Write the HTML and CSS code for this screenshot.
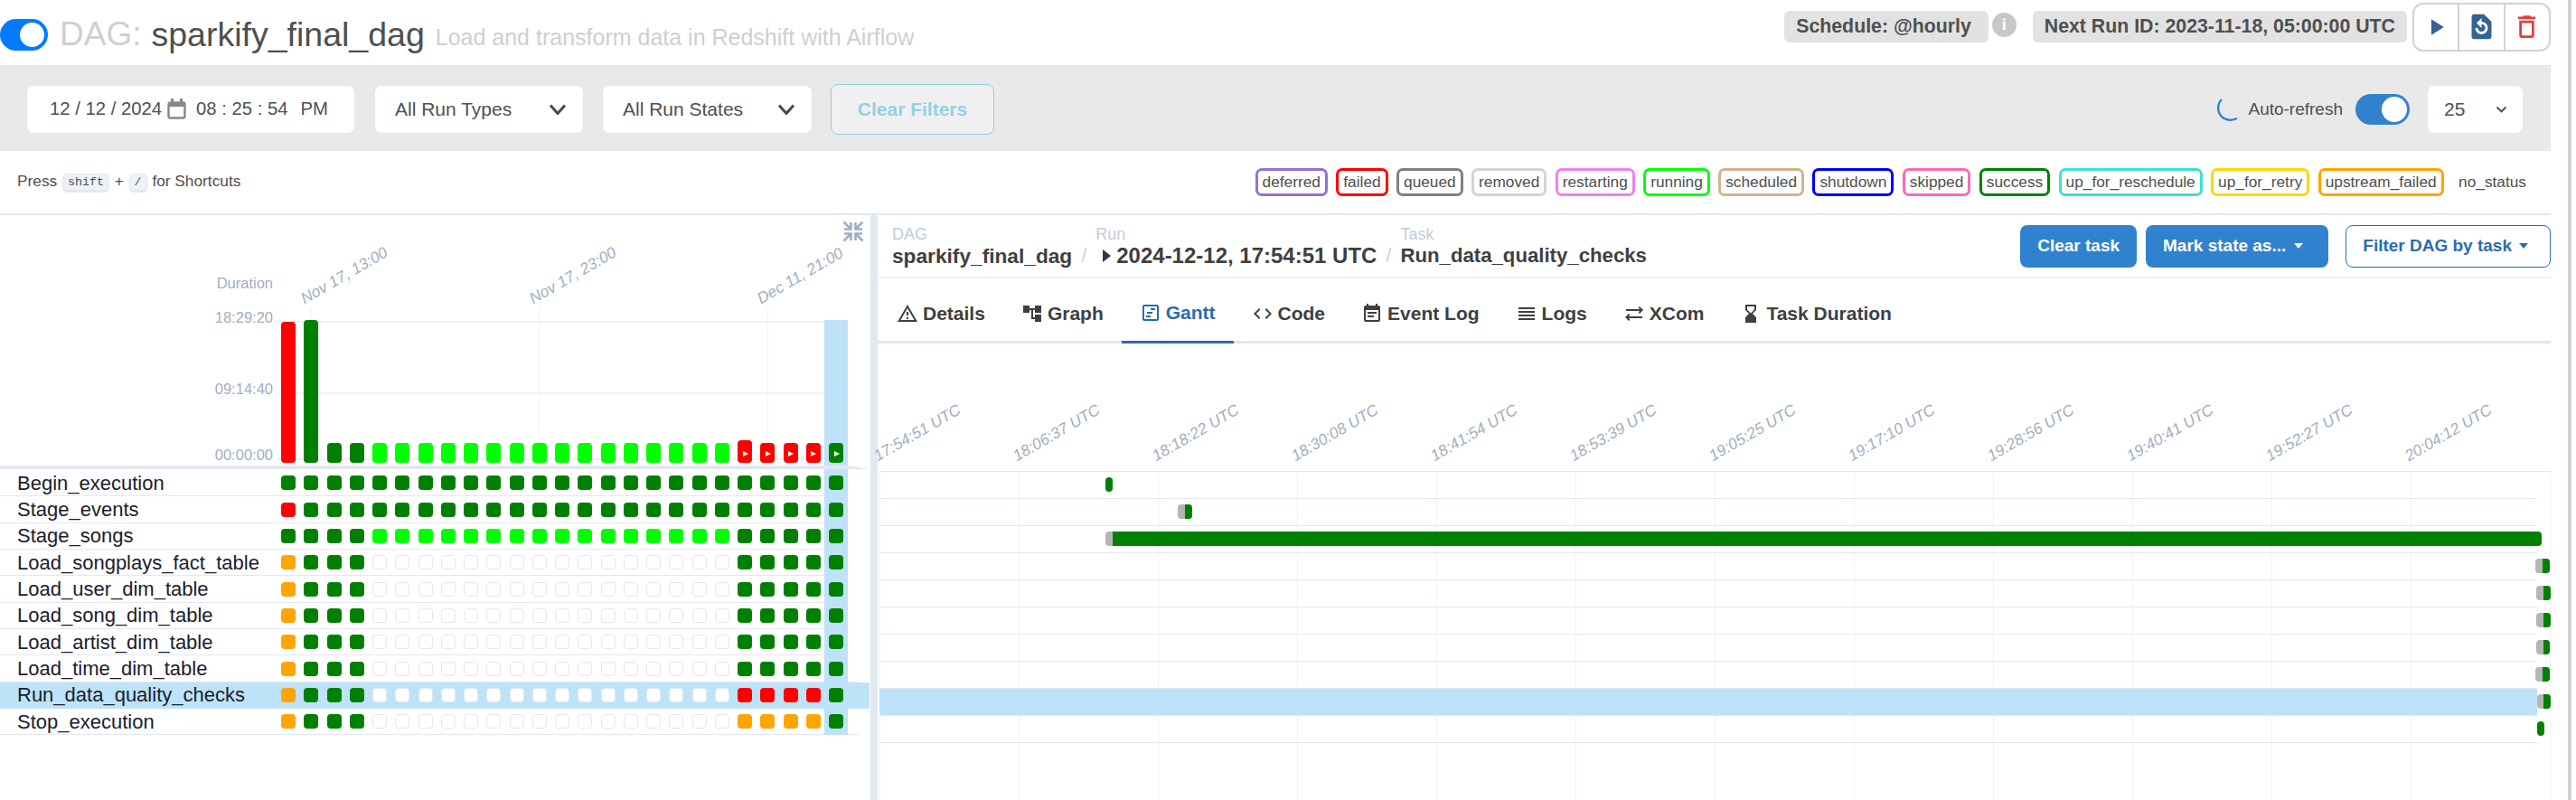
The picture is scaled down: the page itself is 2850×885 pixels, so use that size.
FILE: index.html
```html
<!DOCTYPE html>
<html lang="en">
<head>
<meta charset="utf-8">
<title>sparkify_final_dag - Grid</title>
<link rel="stylesheet" href="styles.css">
</head>
<body>
<div class="page">
<div class="app">
  <header class="header">
    <div class="title">
      <span class="toggle"><span class="knob"></span></span>
      <span class="dag-prefix">DAG:</span>
      <span class="dag-name">sparkify_final_dag</span>
      <span class="dag-desc">Load and transform data in Redshift with Airflow</span>
    </div>
    <div class="actions">
      <span class="pill pill-schedule">Schedule: @hourly</span>
      <span class="info">i</span>
      <span class="pill pill-next">Next Run ID: 2023-11-18, 05:00:00 UTC</span>
      <div class="btn-group">
        <span class="icon-btn"><svg width="30" height="30" viewBox="0 0 24 24"><path fill="#336492" d="M8 5v14l11-7z"/></svg></span>
        <span class="icon-btn"><svg width="33" height="33" viewBox="0 0 24 24"><path fill="#336492" d="M14 2H6c-1.1 0-1.99.9-1.99 2L4 20c0 1.1.89 2 2 2h12c1.1 0 2-.9 2-2V8l-6-6zm-2 16c-2.76 0-5-2.24-5-5h2c0 1.66 1.34 3 3 3s3-1.34 3-3-1.34-3-3-3v3L8 9l4-4v3c2.76 0 5 2.24 5 5s-2.24 5-5 5z"/></svg></span>
        <span class="icon-btn"><svg width="33" height="33" viewBox="0 0 24 24"><path fill="#e53e3e" d="M6 19c0 1.1.9 2 2 2h8c1.1 0 2-.9 2-2V7H6v12zM8 9h8v10H8V9zm7.5-5l-1-1h-5l-1 1H5v2h14V4h-3.5z"/></svg></span>
      </div>
    </div>
  </header>

  <section class="filters">
    <div class="filter-left">
      <div class="field field-date">
        <span>12 / 12 / 2024</span>
        <svg class="cal" width="23" height="23" viewBox="0 0 23 23"><path fill="none" stroke="#888" stroke-width="2.4" d="M2.5 6.5a2 2 0 0 1 2-2h14a2 2 0 0 1 2 2v13a2 2 0 0 1-2 2h-14a2 2 0 0 1-2-2z"/><path fill="#888" d="M2 4h19v5H2zM5 0h3v5H5zM15 0h3v5h-3z"/></svg>
        <span class="time">08 : 25 : 54</span>
        <span class="ampm">PM</span>
      </div>
      <div class="field field-select field-types">
        <span>All Run Types</span>
        <svg width="20" height="12" viewBox="0 0 20 12"><path fill="none" stroke="#4a4a4a" stroke-width="3" d="M2 1.5l8 9 8-9"/></svg>
      </div>
      <div class="field field-select field-states">
        <span>All Run States</span>
        <svg width="20" height="12" viewBox="0 0 20 12"><path fill="none" stroke="#4a4a4a" stroke-width="3" d="M2 1.5l8 9 8-9"/></svg>
      </div>
      <button class="clear-filters">Clear Filters</button>
    </div>
    <div class="filter-right">
      <svg class="spinner" width="27" height="26" viewBox="0 0 27 26"><path fill="none" stroke="#3182ce" stroke-width="2.4" d="M5 2C0 7 0 15 4 20c4 5 12 6 18 3"/></svg>
      <span class="auto-label">Auto-refresh</span>
      <span class="switch"><span class="switch-knob"></span></span>
      <div class="field field-limit">
        <span>25</span>
        <svg width="13" height="8" viewBox="0 0 13 8"><path fill="none" stroke="#4a4a4a" stroke-width="1.8" d="M1.5 1.5l5 5 5-5"/></svg>
      </div>
    </div>
  </section>

  <section class="shortcuts-row">
    <div class="shortcuts">Press <kbd>shift</kbd> + <kbd>/</kbd> for Shortcuts</div>
    <div class="legend">
      <span class="lg lg-deferred">deferred</span>
      <span class="lg lg-failed">failed</span>
      <span class="lg lg-queued">queued</span>
      <span class="lg lg-removed">removed</span>
      <span class="lg lg-restarting">restarting</span>
      <span class="lg lg-running">running</span>
      <span class="lg lg-scheduled">scheduled</span>
      <span class="lg lg-shutdown">shutdown</span>
      <span class="lg lg-skipped">skipped</span>
      <span class="lg lg-success">success</span>
      <span class="lg lg-reschedule">up_for_reschedule</span>
      <span class="lg lg-retry">up_for_retry</span>
      <span class="lg lg-upstream">upstream_failed</span>
      <span class="lg lg-none">no_status</span>
    </div>
  </section>

  <main class="main">
    <section class="left">
      <div class="col-highlight"></div>
      <div class="chart">
        <svg class="collapse" width="24" height="24" viewBox="0 0 24 24"><path fill="none" stroke="#a0aec0" stroke-width="2.6" d="M1.5 1.5l7 7M9.5 2v7.500H2M22.500 1.500l-7 7M14.500 2v7.500H22M1.500 22.500l7-7M9.500 22v-7.500H2M22.500 22.500l-7-7M14.500 22v-7.500H22"/></svg>
        <span class="axis-y axis-dur">Duration</span>
        <span class="axis-y axis-max">18:29:20</span>
        <span class="axis-y axis-mid">09:14:40</span>
        <span class="axis-y axis-min">00:00:00</span>
        <span class="hline hline-max"></span>
        <span class="hline hline-mid"></span>
        <span class="hline hline-min"></span>
        <span class="tick tick-a"></span>
        <span class="tick tick-b"></span>
        <span class="tick tick-c"></span>
        <span class="date-label date-a">Nov 17, 13:00</span>
        <span class="date-label date-b">Nov 17, 23:00</span>
        <span class="date-label date-c">Dec 11, 21:00</span>
        <div class="bars">
          <i class="bar r tall-a"></i><i class="bar g tall-b"></i><i class="bar g"></i><i class="bar g"></i>
          <i class="bar l"></i><i class="bar l"></i><i class="bar l"></i><i class="bar l"></i><i class="bar l"></i><i class="bar l"></i><i class="bar l"></i><i class="bar l"></i><i class="bar l"></i><i class="bar l"></i><i class="bar l"></i><i class="bar l"></i><i class="bar l"></i><i class="bar l"></i><i class="bar l"></i><i class="bar l"></i>
          <i class="bar r man tall-c"></i><i class="bar r man"></i><i class="bar r man"></i><i class="bar r man"></i><i class="bar g man"></i>
        </div>
      </div>
      <div class="split"></div>
      <div class="rows">
        <div class="row"><span class="task">Begin_execution</span><div class="cells"><i class="c g"></i><i class="c g"></i><i class="c g"></i><i class="c g"></i><i class="c g"></i><i class="c g"></i><i class="c g"></i><i class="c g"></i><i class="c g"></i><i class="c g"></i><i class="c g"></i><i class="c g"></i><i class="c g"></i><i class="c g"></i><i class="c g"></i><i class="c g"></i><i class="c g"></i><i class="c g"></i><i class="c g"></i><i class="c g"></i><i class="c g"></i><i class="c g"></i><i class="c g"></i><i class="c g"></i><i class="c g"></i></div></div>
        <div class="row"><span class="task">Stage_events</span><div class="cells"><i class="c r"></i><i class="c g"></i><i class="c g"></i><i class="c g"></i><i class="c g"></i><i class="c g"></i><i class="c g"></i><i class="c g"></i><i class="c g"></i><i class="c g"></i><i class="c g"></i><i class="c g"></i><i class="c g"></i><i class="c g"></i><i class="c g"></i><i class="c g"></i><i class="c g"></i><i class="c g"></i><i class="c g"></i><i class="c g"></i><i class="c g"></i><i class="c g"></i><i class="c g"></i><i class="c g"></i><i class="c g"></i></div></div>
        <div class="row"><span class="task">Stage_songs</span><div class="cells"><i class="c g"></i><i class="c g"></i><i class="c g"></i><i class="c g"></i><i class="c l"></i><i class="c l"></i><i class="c l"></i><i class="c l"></i><i class="c l"></i><i class="c l"></i><i class="c l"></i><i class="c l"></i><i class="c l"></i><i class="c l"></i><i class="c l"></i><i class="c l"></i><i class="c l"></i><i class="c l"></i><i class="c l"></i><i class="c l"></i><i class="c g"></i><i class="c g"></i><i class="c g"></i><i class="c g"></i><i class="c g"></i></div></div>
        <div class="row"><span class="task">Load_songplays_fact_table</span><div class="cells"><i class="c o"></i><i class="c g"></i><i class="c g"></i><i class="c g"></i><i class="c n"></i><i class="c n"></i><i class="c n"></i><i class="c n"></i><i class="c n"></i><i class="c n"></i><i class="c n"></i><i class="c n"></i><i class="c n"></i><i class="c n"></i><i class="c n"></i><i class="c n"></i><i class="c n"></i><i class="c n"></i><i class="c n"></i><i class="c n"></i><i class="c g"></i><i class="c g"></i><i class="c g"></i><i class="c g"></i><i class="c g"></i></div></div>
        <div class="row"><span class="task">Load_user_dim_table</span><div class="cells"><i class="c o"></i><i class="c g"></i><i class="c g"></i><i class="c g"></i><i class="c n"></i><i class="c n"></i><i class="c n"></i><i class="c n"></i><i class="c n"></i><i class="c n"></i><i class="c n"></i><i class="c n"></i><i class="c n"></i><i class="c n"></i><i class="c n"></i><i class="c n"></i><i class="c n"></i><i class="c n"></i><i class="c n"></i><i class="c n"></i><i class="c g"></i><i class="c g"></i><i class="c g"></i><i class="c g"></i><i class="c g"></i></div></div>
        <div class="row"><span class="task">Load_song_dim_table</span><div class="cells"><i class="c o"></i><i class="c g"></i><i class="c g"></i><i class="c g"></i><i class="c n"></i><i class="c n"></i><i class="c n"></i><i class="c n"></i><i class="c n"></i><i class="c n"></i><i class="c n"></i><i class="c n"></i><i class="c n"></i><i class="c n"></i><i class="c n"></i><i class="c n"></i><i class="c n"></i><i class="c n"></i><i class="c n"></i><i class="c n"></i><i class="c g"></i><i class="c g"></i><i class="c g"></i><i class="c g"></i><i class="c g"></i></div></div>
        <div class="row"><span class="task">Load_artist_dim_table</span><div class="cells"><i class="c o"></i><i class="c g"></i><i class="c g"></i><i class="c g"></i><i class="c n"></i><i class="c n"></i><i class="c n"></i><i class="c n"></i><i class="c n"></i><i class="c n"></i><i class="c n"></i><i class="c n"></i><i class="c n"></i><i class="c n"></i><i class="c n"></i><i class="c n"></i><i class="c n"></i><i class="c n"></i><i class="c n"></i><i class="c n"></i><i class="c g"></i><i class="c g"></i><i class="c g"></i><i class="c g"></i><i class="c g"></i></div></div>
        <div class="row row-prelast"><span class="task">Load_time_dim_table</span><div class="cells"><i class="c o"></i><i class="c g"></i><i class="c g"></i><i class="c g"></i><i class="c n"></i><i class="c n"></i><i class="c n"></i><i class="c n"></i><i class="c n"></i><i class="c n"></i><i class="c n"></i><i class="c n"></i><i class="c n"></i><i class="c n"></i><i class="c n"></i><i class="c n"></i><i class="c n"></i><i class="c n"></i><i class="c n"></i><i class="c n"></i><i class="c g"></i><i class="c g"></i><i class="c g"></i><i class="c g"></i><i class="c g"></i></div></div>
        <div class="row row-selected"><span class="task">Run_data_quality_checks</span><div class="cells"><i class="c o"></i><i class="c g"></i><i class="c g"></i><i class="c g"></i><i class="c n"></i><i class="c n"></i><i class="c n"></i><i class="c n"></i><i class="c n"></i><i class="c n"></i><i class="c n"></i><i class="c n"></i><i class="c n"></i><i class="c n"></i><i class="c n"></i><i class="c n"></i><i class="c n"></i><i class="c n"></i><i class="c n"></i><i class="c n"></i><i class="c r"></i><i class="c r"></i><i class="c r"></i><i class="c r"></i><i class="c g"></i></div></div>
        <div class="row row-last"><span class="task">Stop_execution</span><div class="cells"><i class="c o"></i><i class="c g"></i><i class="c g"></i><i class="c g"></i><i class="c n"></i><i class="c n"></i><i class="c n"></i><i class="c n"></i><i class="c n"></i><i class="c n"></i><i class="c n"></i><i class="c n"></i><i class="c n"></i><i class="c n"></i><i class="c n"></i><i class="c n"></i><i class="c n"></i><i class="c n"></i><i class="c n"></i><i class="c n"></i><i class="c o"></i><i class="c o"></i><i class="c o"></i><i class="c o"></i><i class="c g"></i></div></div>
      </div>
    </section>

    <div class="divider"></div>

    <section class="right">
      <div class="crumb-bar">
        <div class="crumbs">
          <div class="crumb"><span class="crumb-label">DAG</span><span class="crumb-value">sparkify_final_dag</span></div>
          <span class="crumb-sep">/</span>
          <div class="crumb"><span class="crumb-label">Run</span><span class="crumb-value crumb-date"><i class="run-arrow"></i>2024-12-12, 17:54:51 UTC</span></div>
          <span class="crumb-sep">/</span>
          <div class="crumb"><span class="crumb-label">Task</span><span class="crumb-value crumb-task">Run_data_quality_checks</span></div>
        </div>
        <div class="crumb-actions">
          <button class="btn btn-solid">Clear task</button>
          <button class="btn btn-solid">Mark state as...<i class="caret"></i></button>
          <button class="btn btn-outline">Filter DAG by task<i class="caret"></i></button>
        </div>
      </div>

      <nav class="tabs">
        <span class="tab"><svg width="24" height="24" viewBox="0 0 24 24"><path fill="currentColor" d="M12 5.990L19.530 19H4.470L12 5.990M12 2L1 21h22L12 2zm1 14h-2v2h2v-2zm0-6h-2v4h2v-4z"/></svg>Details</span>
        <span class="tab"><svg width="24" height="24" viewBox="0 0 24 24"><path fill="currentColor" d="M22 11V3h-7v3H9V3H2v8h7V8h2v10h4v3h7v-8h-7v3h-2V8h2v3z"/></svg>Graph</span>
        <span class="tab tab-active"><svg width="24" height="24" viewBox="0 0 24 24"><path fill="currentColor" d="M19 3H5c-1.100 0-2 .9-2 2v14c0 1.100.9 2 2 2h14c1.100 0 2-.9 2-2V5c0-1.100-.9-2-2-2zm0 16H5V5h14v14zM12 7h5v2h-5zM8 11h6v2H8zM7 15h5v2H7z"/></svg>Gantt</span>
        <span class="tab"><svg width="24" height="24" viewBox="0 0 24 24"><path fill="currentColor" d="M9.400 16.600L4.800 12l4.600-4.600L8 6l-6 6 6 6 1.400-1.400zm5.200 0l4.600-4.600-4.600-4.600L16 6l6 6-6 6-1.400-1.400z"/></svg>Code</span>
        <span class="tab"><svg width="24" height="24" viewBox="0 0 24 24"><path fill="currentColor" d="M17 10H7v2h10v-2zm2-7h-1V1h-2v2H8V1H6v2H5c-1.110 0-1.990.9-1.990 2L3 19c0 1.100.89 2 2 2h14c1.100 0 2-.9 2-2V5c0-1.100-.9-2-2-2zm0 16H5V8h14v11zm-5-5H7v2h7v-2z"/></svg>Event Log</span>
        <span class="tab"><svg width="24" height="24" viewBox="0 0 24 24"><path fill="currentColor" d="M3 15h18v-2H3v2zm0 4h18v-2H3v2zm0-8h18V9H3v2zm0-6v2h18V5H3z"/></svg>Logs</span>
        <span class="tab"><svg width="24" height="24" viewBox="0 0 24 24"><path fill="currentColor" d="M7.410 13.410L6 12l-4 4 4 4 1.410-1.410L5.830 17H21v-2H5.830zM16.590 10.590L18 12l4-4-4-4-1.410 1.410L18.170 7H3v2h15.170z"/></svg>XCom</span>
        <span class="tab"><svg width="24" height="24" viewBox="0 0 24 24"><path fill="currentColor" d="M18 22l-.01-6L14 12l3.990-4.010L18 2H6v6l4 4-4 3.990V22h12zM8 7.500V4h8v3.500l-4 4-4-4z"/></svg>Task Duration</span>
      </nav>

      <div class="gantt-axis">
        <span class="g-label"><b>17:54:51 UTC</b></span>
        <span class="g-label"><b>18:06:37 UTC</b></span>
        <span class="g-label"><b>18:18:22 UTC</b></span>
        <span class="g-label"><b>18:30:08 UTC</b></span>
        <span class="g-label"><b>18:41:54 UTC</b></span>
        <span class="g-label"><b>18:53:39 UTC</b></span>
        <span class="g-label"><b>19:05:25 UTC</b></span>
        <span class="g-label"><b>19:17:10 UTC</b></span>
        <span class="g-label"><b>19:28:56 UTC</b></span>
        <span class="g-label"><b>19:40:41 UTC</b></span>
        <span class="g-label"><b>19:52:27 UTC</b></span>
        <span class="g-label"><b>20:04:12 UTC</b></span>
      </div>
      <div class="gantt">
        <div class="g-row g-row-first"><i class="g-bar ok" style="left:250px;width:8px"></i></div>
        <div class="g-row"><i class="g-bar queued" style="left:330px;width:16px"></i><i class="g-bar ok-end" style="left:338px;width:8px"></i></div>
        <div class="g-row"><i class="g-bar queued" style="left:250px;width:16px"></i><i class="g-bar ok-end" style="left:258px;width:1581px"></i></div>
        <div class="g-row"><i class="g-bar queued" style="left:1832px;width:16px"></i><i class="g-bar ok-end" style="left:1840px;width:8px"></i></div>
        <div class="g-row"><i class="g-bar queued" style="left:1833px;width:16px"></i><i class="g-bar ok-end" style="left:1841px;width:8px"></i></div>
        <div class="g-row"><i class="g-bar queued" style="left:1833px;width:16px"></i><i class="g-bar ok-end" style="left:1841px;width:8px"></i></div>
        <div class="g-row"><i class="g-bar queued" style="left:1833px;width:15px"></i><i class="g-bar ok-end" style="left:1841px;width:7px"></i></div>
        <div class="g-row"><i class="g-bar queued" style="left:1832px;width:16px"></i><i class="g-bar ok-end" style="left:1840px;width:8px"></i></div>
        <div class="g-row g-row-selected"><i class="g-bar queued" style="left:1834px;width:15px"></i><i class="g-bar ok-end" style="left:1841px;width:8px"></i></div>
        <div class="g-row g-row-last"><i class="g-bar ok" style="left:1834px;width:8px"></i></div>
      </div>
    </section>
  </main>
</div>
<div class="strip"></div>
</div>
</body>
</html>
```
FILE: styles.css
```css
* { box-sizing: border-box; }
html, body { margin: 0; padding: 0; background: #fff; overflow: hidden; }
body { font-family: "Liberation Sans", Arial, sans-serif; color: #4f4f4f; }

.page { display: flex; width: 2850px; height: 885px; }
.app { width: 2822px; height: 885px; display: flex; flex-direction: column; }
.strip { width: 4px; height: 885px; margin-left: 19px; background: #cfcfcf; }

/* header */
.header { height: 72px; display: flex; justify-content: space-between; align-items: flex-start; }
.title { height: 76px; display: flex; align-items: center; white-space: nowrap; }
.toggle { width: 53px; height: 35px; border-radius: 18px; background: #007bff; display: flex; align-items: center; justify-content: flex-end; padding-right: 4px; }
.knob { width: 27px; height: 27px; border-radius: 50%; background: #fff; }
.dag-prefix { margin-left: 13px; font-size: 37px; color: #cfcfcf; }
.dag-name { margin-left: 11px; font-size: 37.5px; color: #4f4f4f; }
.dag-desc { margin-left: 12px; margin-top: 6px; font-size: 25px; color: #cfcfcf; }

.actions { height: 59px; display: flex; align-items: center; }
.pill { height: 35px; padding: 0 13px; border-radius: 6px; background: #e2e2e2; font-size: 21.3px; font-weight: 700; display: flex; align-items: center; white-space: nowrap; }
.pill-schedule { padding-right: 19px; }
.pill-next { margin-left: 18px; margin-right: 6px; }
.info { width: 27px; height: 27px; margin: -5px 0 0 4px; border-radius: 50%; background: #c8c8c8; color: #fff; font: 700 18px "Liberation Serif", serif; display: flex; align-items: center; justify-content: center; }
.btn-group { width: 153px; height: 54px; display: flex; border: 2px solid #d2d2d2; border-radius: 12px; }
.icon-btn { flex: 1; display: flex; align-items: center; justify-content: center; border-left: 2px solid #d2d2d2; }
.icon-btn:first-child { border-left: 0; }

/* filters */
.filters { height: 95px; border-top: 2px solid #e2e8f0; background: #e9e9ea; display: flex; justify-content: space-between; align-items: center; padding: 0 30px 0 29px; }
.filter-left, .filter-right { display: flex; align-items: center; }
.field { height: 54px; background: #fff; border: 1px solid #e2e8f0; border-radius: 8px; display: flex; align-items: center; font-size: 21px; color: #4f4f4f; white-space: nowrap; }
.field-date { width: 364px; padding-left: 25px; font-size: 20.3px; }
.cal { margin-left: 5px; }
.time { margin-left: 10px; }
.ampm { margin-left: 14px; }
.field-select { margin-left: 21px; padding: 0 18px 0 22px; justify-content: space-between; }
.field-types { width: 232px; }
.field-states { width: 233px; margin-left: 20px; }
.clear-filters { margin-left: 20px; width: 181px; height: 56px; background: #f0f0f0; border: 1.5px solid #92d0dc; border-radius: 8px; color: #92d2df; font: 700 21px "Liberation Sans", Arial, sans-serif; padding: 0; }
.spinner { margin-right: 7px; }
.auto-label { font-size: 19px; margin-right: 14px; }
.switch { width: 60px; height: 34px; border-radius: 17px; background: #3182ce; display: flex; align-items: center; justify-content: flex-end; padding-right: 3px; }
.switch-knob { width: 28px; height: 28px; border-radius: 50%; background: #fff; }
.field-limit { width: 107px; margin-left: 19px; padding: 0 17px 0 18px; justify-content: space-between; }

/* shortcuts + legend */
.shortcuts-row { height: 69px; display: flex; justify-content: space-between; align-items: center; padding: 0 24px 0 19px; font-size: 17.3px; }
.shortcuts { white-space: nowrap; }
kbd { display: inline-block; margin: 0 1px; padding: 0 5px; height: 21px; font: 13.3px/18px "Liberation Mono", monospace; background: #edf2f7; border: 1px solid #e2e8f0; border-bottom-width: 3px; border-radius: 5px; vertical-align: 1px; }
.legend { display: flex; gap: 9.4px; }
.lg { height: 31px; padding: 0 5px; border: 3px solid; border-radius: 7px; display: flex; align-items: center; white-space: nowrap; }
.lg-deferred { border-color: mediumpurple; }
.lg-failed { border-color: red; }
.lg-queued { border-color: gray; }
.lg-removed { border-color: lightgrey; }
.lg-restarting { border-color: violet; }
.lg-running { border-color: lime; }
.lg-scheduled { border-color: tan; }
.lg-shutdown { border-color: blue; }
.lg-skipped { border-color: hotpink; }
.lg-success { border-color: green; }
.lg-reschedule { border-color: turquoise; }
.lg-retry { border-color: gold; }
.lg-upstream { border-color: orange; }
.lg-none { border-color: transparent; margin-left: 4px; padding: 0; }

/* main */
.main { flex: 1; min-height: 0; display: flex; border-top: 2px solid #e2e8f0; }
.left { width: 963px; position: relative; }
.divider { width: 8px; background: #e2e8f0; }
.right { flex: 1; min-width: 0; display: flex; flex-direction: column; }

/* chart */
.chart { height: 277px; position: relative; display: flex; flex-direction: column; justify-content: flex-end; padding-bottom: 3px; }
.col-highlight { position: absolute; left: 912px; top: 116px; width: 26px; height: 459px; background: #bee3f8; z-index: 1; }
.collapse { position: absolute; left: 932px; top: 6px; }
.axis-y { position: absolute; right: 661px; font-size: 16.5px; line-height: 20px; color: #a0aec0; }
.axis-dur { top: 65px; }
.axis-max { top: 103px; }
.axis-mid { top: 182px; }
.axis-min { top: 255px; }
.hline { position: absolute; left: 306px; width: 632px; height: 2px; background: #edf2f7; }
.hline-max { top: 117px; }
.hline-mid { top: 196px; }
.hline-min { top: 269px; }
.tick { position: absolute; top: 103px; height: 171px; width: 1px; background: #edf2f7; }
.tick-a { left: 343px; }
.tick-b { left: 596px; }
.tick-c { left: 849px; }
.date-label { position: absolute; top: 83px; font-size: 17.3px; line-height: 19px; font-style: italic; color: #a0aec0; white-space: nowrap; transform-origin: 0 100%; transform: rotate(-30deg); }
.date-a { left: 339px; }
.date-b { left: 592px; }
.date-c { left: 844px; }
.bars { margin-left: 311px; width: 622px; display: flex; justify-content: space-between; align-items: flex-end; position: relative; z-index: 2; }
.bar { width: 16px; height: 22px; border-radius: 4px; display: flex; align-items: flex-end; justify-content: center; padding-bottom: 7px; }
.tall-a { height: 156px; }
.tall-b { height: 158px; }
.tall-c { height: 25px; }
.man::after { content: ""; border-left: 6px solid #fff; border-top: 3.500px solid transparent; border-bottom: 3.500px solid transparent; margin-left: 1px; }

.r { background: #f00; }
.g { background: #008000; }
.l { background: #0f0; }
.o { background: #ffa500; }
.n { background: #fff; border: 1px solid #e2e8f0; }

.split { height: 4px; width: 962px; background: #e2e8f0; position: relative; z-index: 3; clip-path: polygon(0 0, 938px 0, 100% 100%, 0 100%); }

/* rows */
.rows { margin-top: 1px; }
.row { width: 938px; height: 29.35px; display: flex; align-items: center; border-bottom: 1px solid #e2e8f0; }
.row-prelast { width: 950px; }
.row-last { width: 950px; }
.row-selected { width: 962px; background: #bee3f8; border-bottom-color: #bee3f8; }
.task { width: 311px; padding: 1px 0 0 19px; font-size: 22px; color: #1a202c; white-space: nowrap; }
.cells { width: 622px; display: flex; justify-content: space-between; position: relative; z-index: 2; }
.c { width: 16px; height: 16px; border-radius: 4px; }

/* right panel */
.crumb-bar { height: 70px; flex: none; padding-left: 16px; display: flex; justify-content: space-between; align-items: center; border-bottom: 2px solid #edf2f7; }
.crumbs { display: flex; align-items: flex-end; }
.crumb { display: flex; flex-direction: column; white-space: nowrap; }
.crumb-label { font-size: 18px; line-height: 22px; color: #c2cdd9; }
.crumb-value { font-size: 22.7px; line-height: 26px; font-weight: 700; color: #3f3f3f; display: flex; align-items: center; }
.crumb-date { font-size: 24px; }
.crumb-task { font-size: 22.2px; }
.crumb-sep { width: 26px; text-align: center; font-size: 22px; line-height: 26px; color: #cbd5e0; }
.run-arrow { width: 0; height: 0; margin: 0 6px 0 8px; border-left: 9px solid #2d3748; border-top: 7px solid transparent; border-bottom: 7px solid transparent; }
.crumb-actions { display: flex; }
.btn { height: 47px; margin-left: 10px; padding: 0 19px; border-radius: 8px; font: 700 19px "Liberation Sans", Arial, sans-serif; display: flex; align-items: center; white-space: nowrap; }
.btn-solid { background: #3182ce; border: 0; color: #fff; }
.btn-outline { margin-left: 19px; padding: 0 16px 0 18px; background: #fff; border: 1.5px solid #2b6cb0; color: #2b6cb0; }
.caret { margin: 0 9px; border-top: 6px solid currentColor; border-left: 5px solid transparent; border-right: 5px solid transparent; }
.btn-outline .caret { margin: 0 8px; }

.tabs { height: 72px; flex: none; display: flex; padding-left: 1px; border-bottom: 3px solid #e2e8f0; }
.tab { height: 72px; padding: 6px 20px 0 20px; display: flex; align-items: center; gap: 5px; font-size: 21px; font-weight: 700; color: #3f3f3f; }
.tab svg { flex: none; }
.tab-active { color: #2b6cb0; border-bottom: 3px solid #2b6cb0; }

.gantt-axis { height: 141px; flex: none; display: flex; align-items: flex-end; padding: 0 0 7px 2px; }
.g-label { width: 154px; flex: none; }
.g-label b { display: block; width: 110px; font-size: 17.3px; line-height: 19px; font-weight: 400; font-style: italic; color: #a0aec0; white-space: nowrap; transform-origin: 0 100%; transform: rotate(-30deg); }

.gantt { flex: 1; margin-left: 2px; background: repeating-linear-gradient(90deg, #edf2f7 0 1px, transparent 1px 154px); }
.g-row { width: 1834px; height: 30px; position: relative; border-top: 1px solid #e2e8f0; }
.g-row-first { width: 1849px; }
.g-row-selected { background: #bee3f8; }
.g-row-last { border-bottom: 1px solid #e2e8f0; height: 31px; }
.g-bar { position: absolute; top: 6px; height: 16px; border-radius: 4px; }
.ok { background: #008000; }
.queued { background: #b5b5b5; }
.ok-end { background: #008000; border-radius: 0 4px 4px 0; }
```
